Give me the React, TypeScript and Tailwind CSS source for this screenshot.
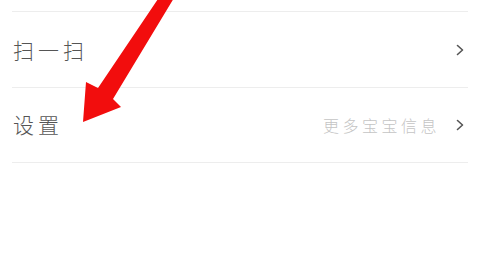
import React from "react";

const rows = [
  { label: "扫一扫", extra: "" },
  { label: "设置", extra: "更多宝宝信息" },
];

function Chevron() {
  return (
    <svg width="8" height="12" viewBox="0 0 8 12" className="shrink-0">
      <path d="M1.5 1.5 L6.5 6 L1.5 10.5" fill="none" stroke="#555" strokeWidth="1.6" strokeLinecap="round" strokeLinejoin="round" />
    </svg>
  );
}

export default function App() {
  return (
    <div
      className="relative h-[257px] w-[492px] overflow-hidden bg-white"
      style={{ fontFamily: '"Noto Sans CJK SC", "Noto Sans", sans-serif' }}
    >
      <div className="pl-3 pr-6 pt-[11px]">
        {rows.map((row, i) => (
          <div
            key={row.label}
            className={`flex h-[76px] items-center border-t border-[#ededed] pl-px pr-[4px] ${
              i === rows.length - 1 ? "border-b" : ""
            }`}
          >
            <span className="text-[21px] font-light tracking-[4px] text-[#555]">
              {row.label}
            </span>
            <span className="ml-auto mr-[16px] text-[16px] font-light tracking-[3.5px] text-[#c4c4c4]">
              {row.extra}
            </span>
            <Chevron />
          </div>
        ))}
      </div>
      <svg
        className="absolute left-0 top-0"
        width="492"
        height="257"
        viewBox="0 0 492 257"
      >
        <polygon
          points="160,-4 174,-2 113,99 121,107 83,122 86,82 98,88"
          fill="#f20d0d"
        />
      </svg>
    </div>
  );
}
